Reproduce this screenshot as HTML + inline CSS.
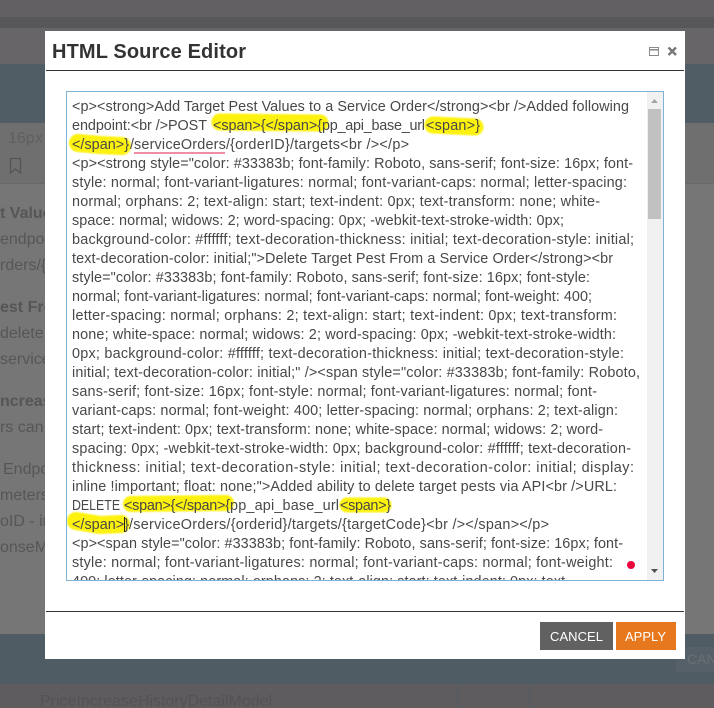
<!DOCTYPE html>
<html>
<head>
<meta charset="utf-8">
<style>
html,body{margin:0;padding:0;width:714px;height:708px;overflow:hidden;background:#757575}
svg{display:block}
.t text{font-family:"Liberation Sans",sans-serif;font-size:14.4px;fill:#484848}
.b text{font-family:"Liberation Sans",sans-serif;font-size:16px;fill:#565658}
</style>
</head>
<body>
<svg width="714" height="708" viewBox="0 0 714 708" xmlns="http://www.w3.org/2000/svg">
<defs><filter id="soft" x="-10%" y="-30%" width="120%" height="160%"><feGaussianBlur stdDeviation="0.7"/></filter></defs>
<!-- background -->
<rect x="0" y="0" width="714" height="17" fill="#626062"/>
<rect x="0" y="17" width="714" height="11" fill="#575658"/>
<rect x="0" y="28" width="714" height="36" fill="#676567"/>
<rect x="0" y="64" width="714" height="59" fill="#505d65"/>
<rect x="0" y="123" width="714" height="60" fill="#6f6f6f"/>
<rect x="0" y="183" width="714" height="1" fill="#686868"/>
<rect x="0" y="184" width="714" height="450" fill="#767676"/>
<rect x="0" y="634" width="714" height="50" fill="#505c64"/>
<rect x="0" y="684" width="714" height="24" fill="#5e5c5e"/>
<rect x="457" y="684" width="1" height="24" fill="#505c64"/>
<rect x="529" y="684" width="1" height="24" fill="#505c64"/>
<rect x="676" y="647" width="38" height="25" fill="#566068"/>
<g class="b">
<text x="8" y="143" style="font-size:16px;fill:#5f5f5f">16px</text>
<text x="0" y="218" style="font-weight:bold">t Value</text>
<text x="0" y="244">endpoint</text>
<text x="0" y="270">rders/{orderID}</text>
<text x="0" y="312" style="font-weight:bold">est From</text>
<text x="0" y="338">delete target</text>
<text x="0" y="364">service</text>
<text x="0" y="406" style="font-weight:bold">ncrease</text>
<text x="0" y="432">rs can</text>
<text x="3" y="474">Endpoint</text>
<text x="0" y="500">meters</text>
<text x="0" y="526">oID - in</text>
<text x="0" y="552">onseModel</text>
<text x="687" y="664" style="font-size:14px;fill:#6a6f74">CAN</text>
<text x="40" y="706" style="font-size:16px;fill:#545254">PriceIncreaseHistoryDetailModel</text>
</g>
<path d="M10.500 158.500h10v14.500l-5-4-5 4z" fill="none" stroke="#545456" stroke-width="1.300"/>
<!-- modal -->
<rect x="45" y="31" width="640" height="628" fill="#fff"/>
<text x="52" y="58" textLength="194" style="font-family:'Liberation Sans',sans-serif;font-weight:bold;font-size:20px;fill:#333">HTML Source Editor</text>
<rect x="46" y="70" width="638" height="1" fill="#333"/>
<rect x="46" y="611" width="638" height="1" fill="#333"/>
<!-- window icons -->
<rect x="649.500" y="47.500" width="9" height="8" fill="none" stroke="#8a8a8a" stroke-width="1"/>
<rect x="649" y="49" width="10" height="1.500" fill="#8a8a8a"/>
<path d="M668.500 47.500l7.500 7.500M676 47.500l-7.500 7.500" fill="none" stroke="#777" stroke-width="2.400"/>
<!-- textarea highlights -->
<g fill="none" stroke="#fdf208" stroke-linecap="round" stroke-linejoin="round" filter="url(#soft)">
<path d="M220 122 L320 123" stroke-width="17"/>
<path d="M433 125 L475 127" stroke-width="17"/>
<path d="M78 143 L100 145 L122 146" stroke-width="18"/>
<path d="M131 504 L226 503" stroke-width="16"/>
<path d="M347 505 L384 505" stroke-width="15"/>
<path d="M76 521 L100 525 L121 524" stroke-width="18"/>
</g>
<rect x="134" y="152" width="91" height="2" fill="#f08ea6"/>
<!-- textarea text -->
<g class="t">
<text x="72" y="111" textLength="557">&lt;p&gt;&lt;strong&gt;Add Target Pest Values to a Service Order&lt;/strong&gt;&lt;br /&gt;Added following</text>
<text x="72" y="130" textLength="135">endpoint:&lt;br /&gt;POST</text>
<text x="213" y="130" textLength="109">&lt;span&gt;{&lt;/span&gt;{</text>
<text x="322" y="130" textLength="103">pp_api_base_url</text>
<text x="426" y="130" textLength="54">&lt;span&gt;}</text>
<text x="72" y="149" textLength="57">&lt;/span&gt;}</text>
<text x="130" y="149" textLength="4">/</text>
<text x="134" y="149" textLength="96">serviceOrders/</text>
<text x="230" y="149" textLength="179">{orderID}/targets&lt;br /&gt;&lt;/p&gt;</text>
<text x="72" y="168" textLength="561">&lt;p&gt;&lt;strong style="color: #33383b; font-family: Roboto, sans-serif; font-size: 16px; font-</text>
<text x="72" y="187" textLength="555">style: normal; font-variant-ligatures: normal; font-variant-caps: normal; letter-spacing:</text>
<text x="72" y="206" textLength="528">normal; orphans: 2; text-align: start; text-indent: 0px; text-transform: none; white-</text>
<text x="72" y="225" textLength="492">space: normal; widows: 2; word-spacing: 0px; -webkit-text-stroke-width: 0px;</text>
<text x="72" y="244" textLength="562">background-color: #ffffff; text-decoration-thickness: initial; text-decoration-style: initial;</text>
<text x="72" y="263" textLength="541">text-decoration-color: initial;"&gt;Delete Target Pest From a Service Order&lt;/strong&gt;&lt;br</text>
<text x="72" y="282" textLength="518">style="color: #33383b; font-family: Roboto, sans-serif; font-size: 16px; font-style:</text>
<text x="72" y="301" textLength="520">normal; font-variant-ligatures: normal; font-variant-caps: normal; font-weight: 400;</text>
<text x="72" y="320" textLength="545">letter-spacing: normal; orphans: 2; text-align: start; text-indent: 0px; text-transform:</text>
<text x="72" y="339" textLength="544">none; white-space: normal; widows: 2; word-spacing: 0px; -webkit-text-stroke-width:</text>
<text x="72" y="358" textLength="552">0px; background-color: #ffffff; text-decoration-thickness: initial; text-decoration-style:</text>
<text x="72" y="377" textLength="568">initial; text-decoration-color: initial;" /&gt;&lt;span style="color: #33383b; font-family: Roboto,</text>
<text x="72" y="396" textLength="525">sans-serif; font-size: 16px; font-style: normal; font-variant-ligatures: normal; font-</text>
<text x="72" y="415" textLength="546">variant-caps: normal; font-weight: 400; letter-spacing: normal; orphans: 2; text-align:</text>
<text x="72" y="434" textLength="531">start; text-indent: 0px; text-transform: none; white-space: normal; widows: 2; word-</text>
<text x="72" y="453" textLength="559">spacing: 0px; -webkit-text-stroke-width: 0px; background-color: #ffffff; text-decoration-</text>
<text x="72" y="472" textLength="562">thickness: initial; text-decoration-style: initial; text-decoration-color: initial; display:</text>
<text x="72" y="491" textLength="545">inline !important; float: none;"&gt;Added ability to delete target pests via API&lt;br /&gt;URL:</text>
<text transform="translate(72 510) scale(.86 1)">DELETE</text>
<text x="124" y="510" textLength="106">&lt;span&gt;{&lt;/span&gt;{</text>
<text x="230" y="510" textLength="109">pp_api_base_url</text>
<text x="340" y="510" textLength="51">&lt;span&gt;}</text>
<text x="72" y="529" textLength="57">&lt;/span&gt;}</text>
<text x="129" y="529" textLength="420">/serviceOrders/{orderid}/targets/{targetCode}&lt;br /&gt;&lt;/span&gt;&lt;/p&gt;</text>
<text x="72" y="548" textLength="551">&lt;p&gt;&lt;span style="color: #33383b; font-family: Roboto, sans-serif; font-size: 16px; font-</text>
<text x="72" y="567" textLength="541">style: normal; font-variant-ligatures: normal; font-variant-caps: normal; font-weight:</text>
<text x="72" y="586" textLength="498">400; letter-spacing: normal; orphans: 2; text-align: start; text-indent: 0px; text-</text>
</g>
<rect x="124" y="517" width="1" height="15" fill="#222"/>
<circle cx="631" cy="565" r="4" fill="#e8083e"/>
<!-- clip bottom of textarea -->
<rect x="60" y="580" width="610" height="20" fill="#fff"/>
<!-- scrollbar -->
<rect x="647" y="92" width="16" height="488" fill="#f1f1f1"/>
<rect x="648" y="109" width="13" height="110" fill="#c1c1c1"/>
<path d="M651 103l3.500-4 3.500 4z" fill="#a3a3a3"/>
<path d="M651 569l3.500 4 3.500-4z" fill="#505050"/>
<!-- textarea border -->
<rect x="66.500" y="91.500" width="597" height="489" fill="none" stroke="#7fb2d6" stroke-width="1"/>
<!-- buttons -->
<rect x="540" y="622" width="73" height="28" fill="#616161"/>
<rect x="616" y="622" width="60" height="28" fill="#e8781e"/>
<text x="550" y="641" textLength="53" style="font-family:'Liberation Sans',sans-serif;font-size:13px;fill:#fff">CANCEL</text>
<text x="625" y="641" textLength="41" style="font-family:'Liberation Sans',sans-serif;font-size:13px;fill:#fff">APPLY</text>
</svg>
</body>
</html>
